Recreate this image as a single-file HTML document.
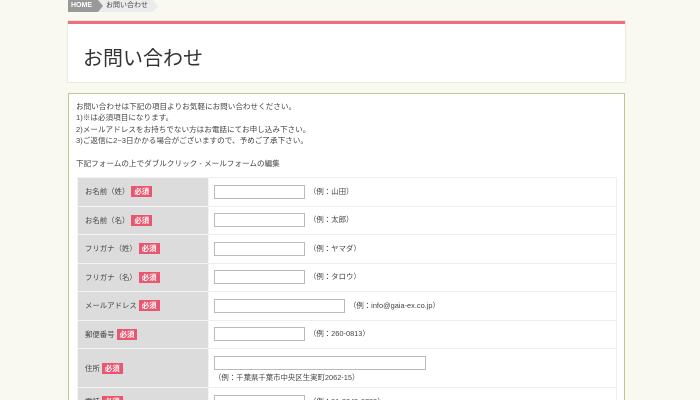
<!DOCTYPE html>
<html><head><meta charset="utf-8"><style>
*{margin:0;padding:0;box-sizing:border-box}
html,body{width:700px;height:400px;overflow:hidden}
body{background:#f9f8f1;font-family:"Liberation Sans","Noto Sans CJK JP",sans-serif;color:#444;position:relative}
.bc{position:absolute;top:0;left:68px;height:12px;font-size:7px;line-height:12px}
.home{position:absolute;left:0;top:0;width:30px;height:12px;background:#999;color:#fff;font-weight:bold;padding-left:3px}
.home:after{content:"";position:absolute;right:-5px;top:0;border-left:5px solid #999;border-top:6px solid transparent;border-bottom:6px solid transparent}
.cur{position:absolute;left:30px;top:0;width:55px;height:12px;background:#ececec;padding-left:8px;color:#444}
.cur:after{content:"";position:absolute;right:-5px;top:0;border-left:5px solid #ececec;border-top:6px solid transparent;border-bottom:6px solid transparent}
.tbox{position:absolute;left:68px;top:21px;width:557px;height:61px;background:#fff;border-top:3px solid #ec6f80;box-shadow:0 0 0 1px #eceade}
.tbox h1{font-weight:normal;font-size:20px;color:#333;position:absolute;left:15px;top:18px}
.gbox{position:absolute;left:68px;top:93px;width:557px;height:320px;background:#fff;border:1px solid #b7cb8c}
.intro{position:absolute;left:7px;top:7px;font-size:7.6px;line-height:11.4px;color:#444}
table{position:absolute;left:8px;top:83px;width:540px;border-collapse:collapse}
td{border:1px solid #eee;font-size:7.4px;height:28.5px;vertical-align:middle}
td.l{width:131px;background:#dcdcdc;padding-left:7px;border-color:#f3f3f3}
td.v{padding-left:5px}
.req{display:inline-block;background:#e9566f;color:#fff;font-weight:bold;padding:0 3px;line-height:11px;margin-left:2px}
.in{display:inline-block;width:91px;height:14px;border:1px solid #bbb;vertical-align:middle;margin-right:4px;background:#fff}
</style></head><body>
<div class="bc"><div class="cur">お問い合わせ</div><div class="home">HOME</div></div>
<div class="tbox"><h1>お問い合わせ</h1></div>
<div class="gbox">
<div class="intro">お問い合わせは下記の項目よりお気軽にお問い合わせください。<br>1)※は必須項目になります。<br>2)メールアドレスをお持ちでない方はお電話にてお申し込み下さい。<br>3)ご返信に2~3日かかる場合がございますので、予めご了承下さい。<br><br>下記フォームの上でダブルクリック - メールフォームの編集</div>
<table>
<tr><td class="l">お名前（姓）<span class="req">必須</span></td><td class="v"><span class="in"></span>（例：山田）</td></tr>
<tr><td class="l">お名前（名）<span class="req">必須</span></td><td class="v"><span class="in"></span>（例：太郎）</td></tr>
<tr><td class="l">フリガナ（姓）<span class="req">必須</span></td><td class="v"><span class="in"></span>（例：ヤマダ）</td></tr>
<tr><td class="l">フリガナ（名）<span class="req">必須</span></td><td class="v"><span class="in"></span>（例：タロウ）</td></tr>
<tr><td class="l">メールアドレス<span class="req">必須</span></td><td class="v"><span class="in" style="width:131px"></span>（例：info@gaia-ex.co.jp）</td></tr>
<tr><td class="l">郵便番号<span class="req">必須</span></td><td class="v"><span class="in"></span>（例：260-0813）</td></tr>
<tr><td class="l" style="height:39px">住所<span class="req">必須</span></td><td class="v"><span class="in" style="width:212px;display:block;margin-top:2px"></span><div style="margin-top:2px">（例：千葉県千葉市中央区生実町2062-15）</div></td></tr>
<tr><td class="l">電話<span class="req">必須</span></td><td class="v"><span class="in"></span>（例：01-2345-6789）</td></tr>
</table>
</div>
</body></html>
